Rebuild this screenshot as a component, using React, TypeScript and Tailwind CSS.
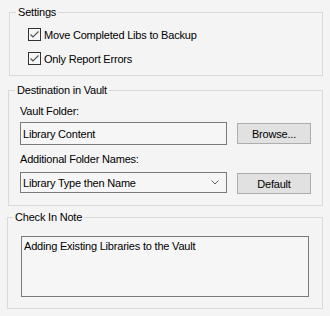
import React from "react";

const font = { fontFamily: '"Liberation Sans", Arial, sans-serif' };

function Check({ label }: { label: string }) {
  return (
    <div className="flex items-center h-[13px] ml-[18px]">
      <div className="w-[13px] h-[13px] border border-[#333333] bg-[#f6f6f6] flex items-center justify-center shrink-0">
        <svg width="11" height="11" viewBox="0 0 11 11">
          <path d="M1.5 5.5 L4 8 L9.5 2.5" fill="none" stroke="#555555" strokeWidth="1.2" />
        </svg>
      </div>
      <span className="ml-[3px] leading-[14px]">{label}</span>
    </div>
  );
}

function Btn({ label }: { label: string }) {
  return (
    <div className="w-[74px] h-[21px] border border-[#adadad] bg-[#e1e1e1] flex items-center justify-center leading-[14px]">
      {label}
    </div>
  );
}

export default function App() {
  return (
    <div
      className="w-[330px] h-[316px] bg-[#f4f4f4] text-black text-[11px] tracking-[-0.2px] flex flex-col overflow-hidden"
      style={font}
    >
      <fieldset className="ml-[9px] mt-[5px] w-[314px] h-[71px] border border-[#d9d9d9] flex-none">
        <legend className="ml-[6px] px-[2px] leading-[14px]">Settings</legend>
        <div className="mt-[9px] flex flex-col gap-[11px]">
          <Check label="Move Completed Libs to Backup" />
          <Check label="Only Report Errors" />
        </div>
      </fieldset>

      <fieldset className="ml-[8px] mt-[7px] w-[315px] h-[123px] border border-[#d9d9d9] flex-none">
        <legend className="ml-[6px] px-[2px] leading-[14px]">Destination in Vault</legend>
        <div className="ml-[11px] mt-[7px] leading-[14px]">Vault Folder:</div>
        <div className="ml-[11px] mt-[4px] flex items-center gap-[10px]">
          <div className="w-[207px] h-[23px] border border-[#7a7a7a] bg-[#f6f6f6] flex items-center pl-[2px] leading-[14px]">
            Library Content
          </div>
          <Btn label="Browse..." />
        </div>
        <div className="ml-[11px] mt-[7px] leading-[14px]">Additional Folder Names:</div>
        <div className="ml-[11px] mt-[5px] flex items-center gap-[10px]">
          <div className="w-[207px] h-[21px] border border-[#7a7a7a] bg-[#f6f6f6] flex items-center justify-between pl-[2px] leading-[14px]">
            <span>Library Type then Name</span>
            <svg width="8" height="5" viewBox="0 0 8 5" className="mr-[7px]">
              <path d="M0.5 0.5 L4 4 L7.5 0.5" fill="none" stroke="#606060" strokeWidth="1" />
            </svg>
          </div>
          <div className="mt-[2px]">
            <Btn label="Default" />
          </div>
        </div>
      </fieldset>

      <fieldset className="ml-[7px] mt-[4px] w-[316px] h-[99px] border border-[#d9d9d9] flex-none">
        <legend className="ml-[5px] px-[2px] leading-[14px]">Check In Note</legend>
        <div className="ml-[13px] mt-[12px] w-[288px] h-[61px] border border-[#7a7a7a] bg-[#f6f6f6] pt-[2px] px-[2px] leading-[14px]">
          Adding Existing Libraries to the Vault
        </div>
      </fieldset>
    </div>
  );
}
